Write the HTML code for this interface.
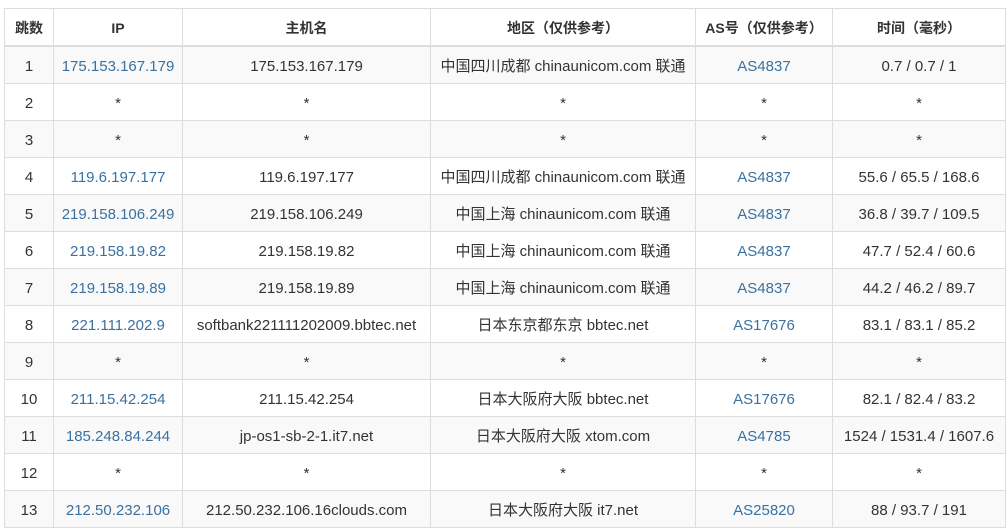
<!DOCTYPE html><html><head><meta charset="utf-8"><style>
body{margin:0;background:#fff;font-family:"Liberation Sans","Noto Sans CJK SC",sans-serif;font-size:15px;color:#333}
table{position:absolute;left:4px;top:8px;border-collapse:collapse;table-layout:fixed;width:1001px}
td,th{border:1px solid #ddd;text-align:center;padding:3px 0 0 0;height:33px;line-height:33px;white-space:nowrap;overflow:hidden}
th{font-weight:bold;font-size:14px;border-bottom:2px solid #ddd}
tbody tr:nth-child(odd){background:#f9f9f9}
a{color:#3a71a0;text-decoration:none}
</style></head><body>
<table>
<colgroup><col style="width:49px"><col style="width:129px"><col style="width:248px"><col style="width:265px"><col style="width:137px"><col style="width:173px"></colgroup>
<thead><tr><th>跳数</th><th>IP</th><th>主机名</th><th>地区（仅供参考）</th><th>AS号（仅供参考）</th><th>时间（毫秒）</th></tr></thead>
<tbody>
<tr><td>1</td><td><a>175.153.167.179</a></td><td>175.153.167.179</td><td>中国四川成都 chinaunicom.com 联通</td><td><a>AS4837</a></td><td>0.7 / 0.7 / 1</td></tr>
<tr><td>2</td><td>*</td><td>*</td><td>*</td><td>*</td><td>*</td></tr>
<tr><td>3</td><td>*</td><td>*</td><td>*</td><td>*</td><td>*</td></tr>
<tr><td>4</td><td><a>119.6.197.177</a></td><td>119.6.197.177</td><td>中国四川成都 chinaunicom.com 联通</td><td><a>AS4837</a></td><td>55.6 / 65.5 / 168.6</td></tr>
<tr><td>5</td><td><a>219.158.106.249</a></td><td>219.158.106.249</td><td>中国上海 chinaunicom.com 联通</td><td><a>AS4837</a></td><td>36.8 / 39.7 / 109.5</td></tr>
<tr><td>6</td><td><a>219.158.19.82</a></td><td>219.158.19.82</td><td>中国上海 chinaunicom.com 联通</td><td><a>AS4837</a></td><td>47.7 / 52.4 / 60.6</td></tr>
<tr><td>7</td><td><a>219.158.19.89</a></td><td>219.158.19.89</td><td>中国上海 chinaunicom.com 联通</td><td><a>AS4837</a></td><td>44.2 / 46.2 / 89.7</td></tr>
<tr><td>8</td><td><a>221.111.202.9</a></td><td>softbank221111202009.bbtec.net</td><td>日本东京都东京 bbtec.net</td><td><a>AS17676</a></td><td>83.1 / 83.1 / 85.2</td></tr>
<tr><td>9</td><td>*</td><td>*</td><td>*</td><td>*</td><td>*</td></tr>
<tr><td>10</td><td><a>211.15.42.254</a></td><td>211.15.42.254</td><td>日本大阪府大阪 bbtec.net</td><td><a>AS17676</a></td><td>82.1 / 82.4 / 83.2</td></tr>
<tr><td>11</td><td><a>185.248.84.244</a></td><td>jp-os1-sb-2-1.it7.net</td><td>日本大阪府大阪 xtom.com</td><td><a>AS4785</a></td><td>1524 / 1531.4 / 1607.6</td></tr>
<tr><td>12</td><td>*</td><td>*</td><td>*</td><td>*</td><td>*</td></tr>
<tr><td>13</td><td><a>212.50.232.106</a></td><td>212.50.232.106.16clouds.com</td><td>日本大阪府大阪 it7.net</td><td><a>AS25820</a></td><td>88 / 93.7 / 191</td></tr>
</tbody></table>
</body></html>
